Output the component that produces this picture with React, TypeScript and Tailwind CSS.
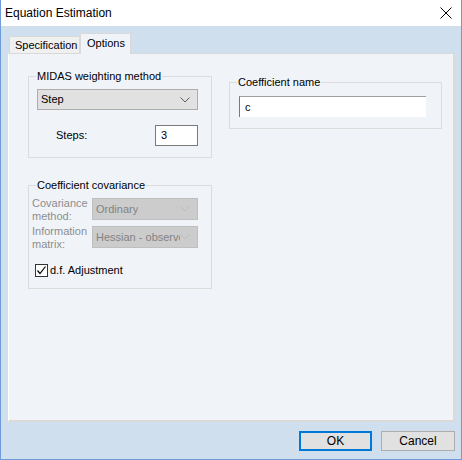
import type { ReactElement } from 'react';

function Chevron({ color }: { color: string }): ReactElement {
  return (
    <svg width="10" height="6" viewBox="0 0 10 6" className="shrink-0">
      <path d="M0.5 0.5 L5 5 L9.5 0.5" fill="none" stroke={color} strokeWidth="1" />
    </svg>
  );
}

function Combo({
  value,
  disabled,
  className,
}: {
  value: string;
  disabled?: boolean;
  className: string;
}): ReactElement {
  return (
    <div
      className={
        disabled
          ? `flex items-center justify-between overflow-hidden border border-[#bfbfbf] bg-[#cccccc] pl-[3px] pr-[7px] text-[#838383] ${className}`
          : `flex items-center justify-between overflow-hidden border border-[#adadad] bg-[#e1e1e1] pl-[3px] pr-[7px] text-black ${className}`
      }
    >
      <span className="whitespace-nowrap overflow-hidden">{value}</span>
      <Chevron color={disabled ? '#bdbdbd' : '#606060'} />
    </div>
  );
}

function Group({
  title,
  className,
  children,
}: {
  title: string;
  className: string;
  children: React.ReactNode;
}): ReactElement {
  return (
    <div className={`relative border border-[#dcdcdc] ${className}`}>
      <span className="absolute -top-[8px] left-[7px] bg-[#f0f4f9] px-[1px] leading-[14px] text-black">
        {title}
      </span>
      {children}
    </div>
  );
}

export default function App(): ReactElement {
  return (
    <div className="flex h-[460px] w-[462px] flex-col border-x border-b border-[#6f9bd8] bg-[#cfdfee] font-['Liberation_Sans',Arial,sans-serif] text-[11px] text-black">
      <div className="flex h-[26px] items-center justify-between bg-white pl-[4px] pr-[9px]">
        <span className="text-[12px] leading-[16px]">Equation Estimation</span>
        <svg width="12" height="12" viewBox="0 0 12 12">
          <path d="M0.5 0.5 L11.5 11.5 M11.5 0.5 L0.5 11.5" stroke="#000" strokeWidth="1" />
        </svg>
      </div>

      <div className="flex flex-1 flex-col pl-[7px] pr-[6px] pt-[7px]">
        <div className="relative z-10 flex h-[20px] items-end pl-[1px]">
          <div className="flex h-[17px] w-[71px] items-center border-x border-t border-[#d9d9d9] bg-[#f0f0f0] pl-[5px]">
            Specification
          </div>
          <div className="-mb-px flex h-[21px] w-[51px] items-center border-x border-t border-[#d9d9d9] bg-[#f0f4f9] pb-[2px] pl-[6px]">
            Options
          </div>
        </div>

        <div className="flex h-[369px] gap-[17px] border-b-2 border-l border-r-2 border-t border-b-[#dadada] border-l-white border-r-[#dadada] border-t-[#d9d9d9] bg-[#f0f4f9] pl-[19px] pt-[22px]">
          <div className="flex w-[184px] flex-col">
            <Group title="MIDAS weighting method" className="h-[82px] pl-[8px] pt-[12px]">
              <Combo value="Step" className="h-[21px] w-[161px]" />
              <div className="mt-[15px] flex w-[161px] items-center justify-between">
                <span className="pl-[19px]">Steps:</span>
                <div className="flex h-[21px] w-[43px] items-center border border-[#7a7a7a] bg-white pl-[5px]">3</div>
              </div>
            </Group>

            <Group title="Coefficient covariance" className="mt-[27px] h-[104px] pl-[3px] pt-[12px]">
              <div className="flex h-[22px] items-start">
                <span className="-mt-[1px] w-[60px] leading-[13px] text-[#8d8d8d]">
                  Covariance
                  <br />
                  method:
                </span>
                <Combo value="Ordinary" disabled className="h-[22px] w-[106px]" />
              </div>
              <div className="mt-[6px] flex h-[22px] items-start">
                <span className="-mt-[1px] w-[60px] leading-[13px] text-[#8d8d8d]">
                  Information
                  <br />
                  matrix:
                </span>
                <Combo value="Hessian - observed" disabled className="h-[22px] w-[106px]" />
              </div>
              <div className="mt-[14px] flex items-center pl-[3px]">
                <div className="flex h-[13px] w-[13px] items-center justify-center border border-[#333333] bg-white">
                  <svg width="11" height="11" viewBox="0 0 11 11">
                    <path d="M1.5 5.5 L4 8.5 L9.5 1.5" fill="none" stroke="#000" strokeWidth="1.2" />
                  </svg>
                </div>
                <span className="ml-[2px]">d.f. Adjustment</span>
              </div>
            </Group>
          </div>

          <div className="mt-[6px] w-[213px]">
            <Group title="Coefficient name" className="h-[47px] pl-[9px] pt-[13px]">
              <div className="flex h-[21px] w-[187px] items-center border-l border-t border-l-[#7a7a7a] border-t-[#a0a0a0] bg-white pl-[5px]">
                c
              </div>
            </Group>
          </div>
        </div>

        <div className="mt-[9px] flex justify-end gap-[9px]">
          <button className="flex h-[20px] w-[73px] items-center justify-center border-2 border-[#0078d7] bg-[#e1e1e1] text-[12px]">
            OK
          </button>
          <button className="flex h-[20px] w-[74px] items-center justify-center border border-[#adadad] bg-[#e1e1e1] text-[12px]">
            Cancel
          </button>
        </div>
      </div>
    </div>
  );
}
